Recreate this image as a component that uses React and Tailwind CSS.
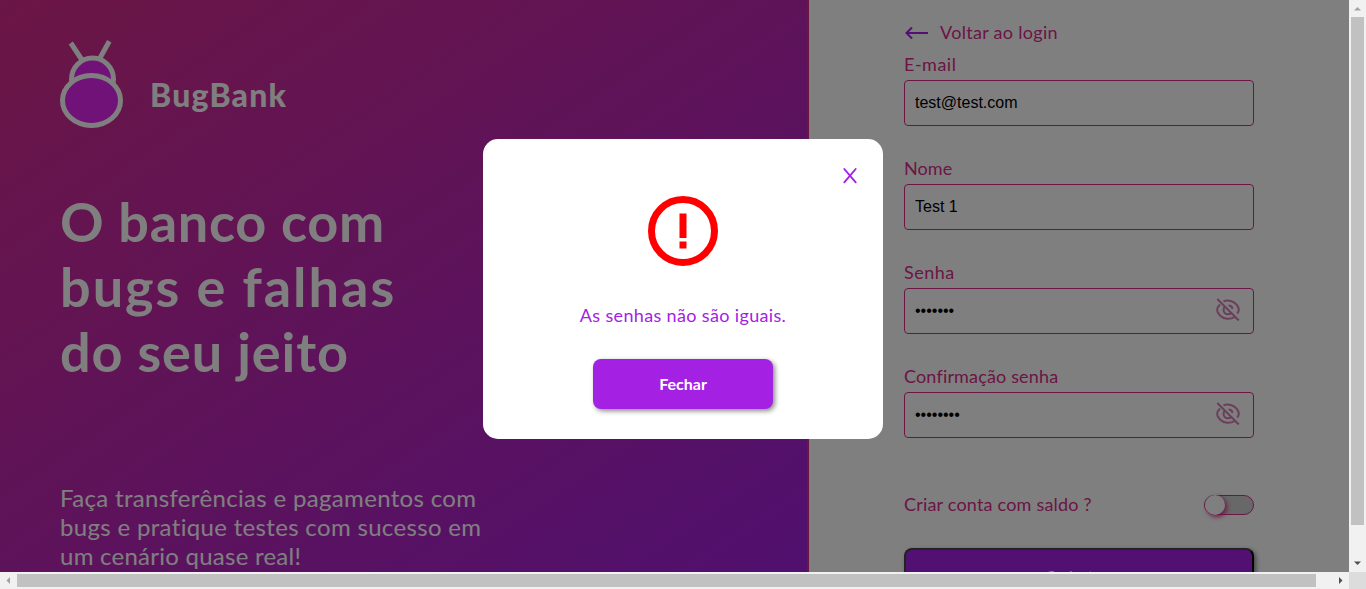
import React from "react";

const fields = [
  { label: "E-mail", type: "text", value: "test@test.com", sp: "tracking-[0.5px]" },
  { label: "Nome", type: "text", value: "Test 1", sp: "tracking-[0.1px]" },
  { label: "Senha", type: "password", value: "1234567", sp: "tracking-[0.5px]" },
  { label: "Confirmação senha", type: "password", value: "12345678", sp: "tracking-[0.16px]" },
];

function Bug() {
  return (
    <svg width="64" height="90" viewBox="0 0 64 90" className="shrink-0">
      <g stroke="#fff" strokeWidth="5" fill="#e124ee">
        <path d="M10.800 4 21.700 20.500M49.300 2.200 40 19" fill="none" />
        <circle cx="32.500" cy="40" r="21" />
        <ellipse cx="31.500" cy="61.500" rx="29" ry="25" />
      </g>
    </svg>
  );
}

function EyeOff() {
  return (
    <svg width="24" height="24" viewBox="0 0 24 24" fill="none" stroke="#c8459a" strokeWidth="2" className="-mt-[2px] opacity-70">
      <path d="M7.500 3.200C12 1.500 18 3 21 7.200c2.500 3.200 2.300 5.800.2 8.300M4 6.500c-3.800 3.600-3.800 7.500 0 11 4 4 10.500 4.300 14.500 1.500" />
      <path d="M9 8.500c-2 2-2 5 0 6.700 2 1.600 5 1.300 6.300-.4M12.500 7.500c2 0 3.700 1.500 3.900 3.500" />
      <path d="m1.300 1 21.500 21.500" />
    </svg>
  );
}

export default function App() {
  return (
    <div className="grid h-[589px] w-[1366px] grid-cols-[1349px_17px] grid-rows-[572px_17px] overflow-hidden bg-[#f1f1f1] font-['Lato',sans-serif]">
      <div className="relative flex overflow-hidden bg-white">
        <section className="flex h-[700px] w-[809px] shrink-0 flex-col border-r-2 border-[#d62c80] bg-[linear-gradient(146deg,#d62c8a_0%,#9c1fe8_100%)] pl-[60px] pt-[39px] text-white">
          <div className="flex h-[90px] items-start">
            <Bug />
            <h2 className="ml-[26px] mt-[37px] text-[32px] font-black leading-[37px] tracking-[1.200px]">BugBank</h2>
          </div>
          <h1 className="mt-[60px] whitespace-nowrap text-[54px] font-bold leading-[65px]">
            <span className="block tracking-[0.75px]">O banco com</span>
            <span className="block tracking-[2px]">bugs e falhas</span>
            <span className="block tracking-[0.9px]">do seu jeito</span>
          </h1>
          <p className="mt-[99px] whitespace-nowrap text-[24px] leading-[29px] tracking-[0.33px]">
            <span className="block">Faça transferências e pagamentos com</span>
            <span className="block">bugs e pratique testes com sucesso em</span>
            <span className="block tracking-[0.25px]">um cenário quase real!</span>
          </p>
        </section>

        <section className="flex w-[540px] flex-col pl-[95px] pt-[20px] text-[18px] text-[#d62c8a]">
          <a className="flex h-[26px] items-center">
            <svg width="36" height="26" viewBox="0 0 36 26" fill="none" stroke="#a421e4" strokeWidth="2">
              <path d="M24 13H3M8 7.500 2.500 13 8 18.500" />
            </svg>
            <span className="pb-[2px] tracking-[0.3px]">Voltar ao login</span>
          </a>
          <form className="mt-[8px] flex w-[350px] flex-col">
            {fields.map((f) => (
              <label key={f.label} className="mb-[32px] flex flex-col">
                <span className={"flex h-[26px] items-center pb-[5px] " + f.sp}>{f.label}</span>
                <span className="flex h-[46px] items-center rounded-[4px] border border-[#d62c8a] pl-[10px] pr-[13px]">
                  <input readOnly type={f.type} value={f.value} className="min-w-0 flex-1 font-['Liberation_Sans',sans-serif] text-[16px] text-black outline-none" />
                  {f.type === "password" && <EyeOff />}
                </span>
              </label>
            ))}
            <div className="mt-[20px] flex h-[30px] items-center justify-between">
              <span className="pb-[1px] tracking-[0.2px]">Criar conta com saldo ?</span>
              <span className="flex h-[20px] w-[50px] items-center rounded-full border border-[#d62c8a] bg-[#d0d0d0]">
                <span className="h-[20px] w-[20px] rounded-full bg-white shadow-[2px_2px_5px_#d62c8a]" />
              </span>
            </div>
            <button type="button" className="mt-[28px] h-[55px] rounded-[8px] border-2 border-[#444] border-r-black bg-[#a421e4] text-[16px] font-normal text-white shadow-[2px_2px_5px_#888]">Cadastrar</button>
          </form>
        </section>

        <div className="absolute inset-0 bg-black/50" />
        <div className="absolute left-[483px] top-[139px] flex h-[300px] w-[400px] flex-col items-center rounded-[15px] bg-white text-[#a421e4]">
          <div className="flex h-[57px] w-full justify-end pr-[25px] pt-[28px]">
            <svg width="16" height="18" viewBox="0 0 16 18" fill="none" stroke="#a421e4" strokeWidth="1.900" strokeLinecap="round">
              <path d="M2.300 2 13.700 15.300M13.700 2 2.300 15.300" />
            </svg>
          </div>
          <svg width="70" height="70" viewBox="0 0 70 70" className="shrink-0">
            <circle cx="35" cy="35" r="31.500" fill="none" stroke="red" strokeWidth="7" />
            <path d="M31.500 17.500h7V42h-7zM31.500 45.500h7v7h-7z" fill="red" />
          </svg>
          <p className="mt-[37px] text-[18px] leading-[24px] tracking-[0.35px]">As senhas não são iguais.</p>
          <button type="button" className="mt-[32px] h-[50px] w-[180px] rounded-[8px] bg-[#a421e4] pb-[1px] text-[16px] font-bold text-white shadow-[2px_2px_5px_#888]">Fechar</button>
        </div>
      </div>

      <div className="flex flex-col items-center">
        <svg width="17" height="17" viewBox="0 0 17 17"><path d="M5 10.500h7L8.500 7z" fill="#a3a3a3" /></svg>
        <div className="h-[508px] w-[13px] bg-[#c1c1c1]" />
        <svg width="17" height="17" viewBox="0 0 17 17" className="mt-auto"><path d="M5 6.500h7L8.500 10z" fill="#505050" /></svg>
      </div>
      <div className="flex items-center">
        <svg width="17" height="17" viewBox="0 0 17 17"><path d="M10 5v7L6.500 8.500z" fill="#a3a3a3" /></svg>
        <div className="h-[13px] w-[1299px] bg-[#c1c1c1]" />
        <svg width="17" height="17" viewBox="0 0 17 17" className="ml-auto"><path d="M7 5v7l3.500-3.500z" fill="#505050" /></svg>
      </div>
      <div className="bg-[#dcdcdc]" />
    </div>
  );
}
